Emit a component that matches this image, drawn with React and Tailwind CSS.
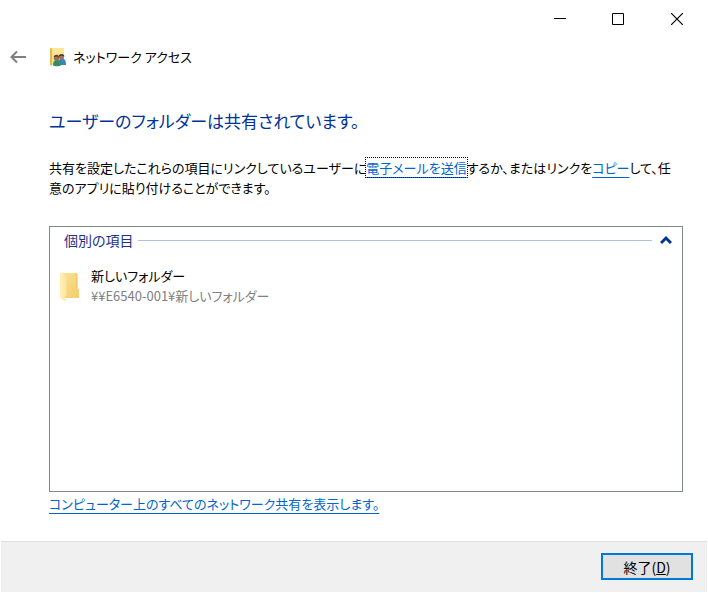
import { useState } from 'react';

const items = [
    { id: 1, name: '新しいフォルダー', path: '¥¥E6540-001¥新しいフォルダー' },
];

const BackIcon = () => (
    <svg className="h-4 w-4" viewBox="0 0 16 16" fill="none" stroke="#808080" strokeWidth="2">
        <path d="M1 8h15M7 2.5L1.5 8 7 13.5" />
    </svg>
);

const SharedFolderIcon = () => (
    <svg className="h-5 w-4" viewBox="0 0 16 20">
        <path d="M0 1h14v17H0z" fill="#fbe08a" />
        <path d="M0 1l2 1v17l-2-1z" fill="#dfb955" />
        <path d="M2 1h12v6H2z" fill="#fde596" />
        <path d="M8 18c0-4 1-6.500 4-6.500s4 2.500 4 6.500z" fill="#3d82c4" />
        <circle cx="11.5" cy="9.8" r="2.600" fill="#a9714c" />
        <path d="M8.800 9.500c-.3-3.500 6-3.500 5.600 0-1.500-1-3.500-1-5.600 0z" fill="#3f3f3f" />
        <path d="M3 18.500c0-3.500 1-5.500 4-5.500s4 2 4 5.500c-2 1-6 1-8 0z" fill="#2f9163" />
        <circle cx="6.500" cy="11" r="2.600" fill="#a56a45" />
        <path d="M3.700 10.500c-.4-3.600 6-3.600 5.600 0-1.500-1.200-3.800-1.200-5.600 0z" fill="#4a4640" />
    </svg>
);

const FolderIcon = () => (
    <svg className="h-8 w-8 shrink-0" viewBox="0 0 32 32">
        <defs>
            <linearGradient id="folderBack" x1="0" y1="0" x2="1" y2="1">
                <stop offset="0" stopColor="#fbe296" />
                <stop offset="1" stopColor="#f2cd6a" />
            </linearGradient>
            <linearGradient id="folderFront" x1="0" y1="0" x2="1" y2="0">
                <stop offset="0" stopColor="#fff0b8" />
                <stop offset="1" stopColor="#fee59a" />
            </linearGradient>
        </defs>
        <path d="M6 3h16v15l2 1v9H10V6z" fill="url(#folderBack)" />
        <path d="M22 4v14" stroke="#e6bb52" strokeWidth="1" />
        <path d="M5 3l1.500 0 5 4.500v18l-1 1v5L5 27.500z" fill="url(#folderFront)" />
    </svg>
);

const Link = ({ children, className = '' }) => (
    <a href="#" className={`text-[#0066cc] underline underline-offset-4 ${className}`}>
        {children}
    </a>
);

const App = () => {
    const [isOpen, setIsOpen] = useState(true);

    return (
        <div className="flex min-h-screen flex-col bg-white p-px font-['Noto_Sans_CJK_JP',sans-serif] text-[13px] leading-5 text-black [font-feature-settings:'palt']">
            {/* Window controls */}
            <div className="flex h-9 shrink-0 justify-end">
                <button type="button" aria-label="最小化" className="flex w-[58px] items-center justify-center">
                    <svg className="h-3 w-3" viewBox="0 0 12 12" shapeRendering="crispEdges">
                        <path d="M0 5h12v1H0z" />
                    </svg>
                </button>
                <button type="button" aria-label="最大化" className="flex w-[58px] items-center justify-center">
                    <svg className="h-3 w-3" viewBox="0 0 12 12" fill="none" stroke="black">
                        <path d="M.5.5h11v11H.5z" />
                    </svg>
                </button>
                <button type="button" aria-label="閉じる" className="flex w-[60px] items-center justify-center">
                    <svg className="h-3 w-3" viewBox="0 0 12 12" stroke="black" strokeWidth="1.2">
                        <path d="M0 0l12 12M12 0L0 12" />
                    </svg>
                </button>
            </div>

            {/* Title */}
            <header className="flex h-10 shrink-0 items-center pl-[9px]">
                <button type="button" aria-label="戻る">
                    <BackIcon />
                </button>
                <div className="ml-6 flex items-center gap-[7px]">
                    <SharedFolderIcon />
                    <span>ネットワーク アクセス</span>
                </div>
            </header>

            <main className="flex flex-1 flex-col pt-8 pr-6 pb-[27px] pl-12">
                <h1 className="text-[17px] leading-6 text-[#003399]">ユーザーのフォルダーは共有されています。</h1>

                <p className="mt-[25px] pr-2">
                    共有を設定したこれらの項目にリンクしているユーザーに
                    <Link className="outline-1 outline-black outline-dotted">電子メールを送信</Link>
                    するか、またはリンクを
                    <Link>コピー</Link>
                    して、任意のアプリに貼り付けることができます。
                </p>

                <section className="mt-7 flex-1 border border-[#828790]">
                    <button
                        type="button"
                        aria-expanded={isOpen}
                        onClick={() => setIsOpen(!isOpen)}
                        className="flex w-full items-center pt-[3px] pr-[10px] pl-[14px] text-sm text-[#1e3287]"
                    >
                        個別の項目
                        <span className="mr-2 ml-1 h-px flex-1 bg-[#b0c0de]" />
                        <svg className="h-3 w-3" viewBox="0 0 12 12" fill="none" stroke="#003399" strokeWidth="3">
                            <path d="M1 9l5-5 5 5" />
                        </svg>
                    </button>
                    {isOpen && (
                        <ul className="pt-4">
                            {items.map((item) => (
                                <li key={item.id} className="flex items-center gap-1 pl-[5px]">
                                    <FolderIcon />
                                    <div>
                                        <div>{item.name}</div>
                                        <div className="text-[#808080]">{item.path}</div>
                                    </div>
                                </li>
                            ))}
                        </ul>
                    )}
                </section>

                <div className="mt-0.5">
                    <Link>コンピューター上のすべてのネットワーク共有を表示します。</Link>
                </div>
            </main>

            <footer className="flex shrink-0 justify-end border-t border-[#dfdfdf] bg-[#f0f0f0] px-[14px] pt-[11px] pb-3">
                <button
                    type="button"
                    className="flex h-[27px] w-[92px] items-center justify-center border-2 border-[#0078d7] bg-[#e1e1e1] text-sm"
                >
                    終了(<span className="underline">D</span>)
                </button>
            </footer>
        </div>
    );
};

export default App;
